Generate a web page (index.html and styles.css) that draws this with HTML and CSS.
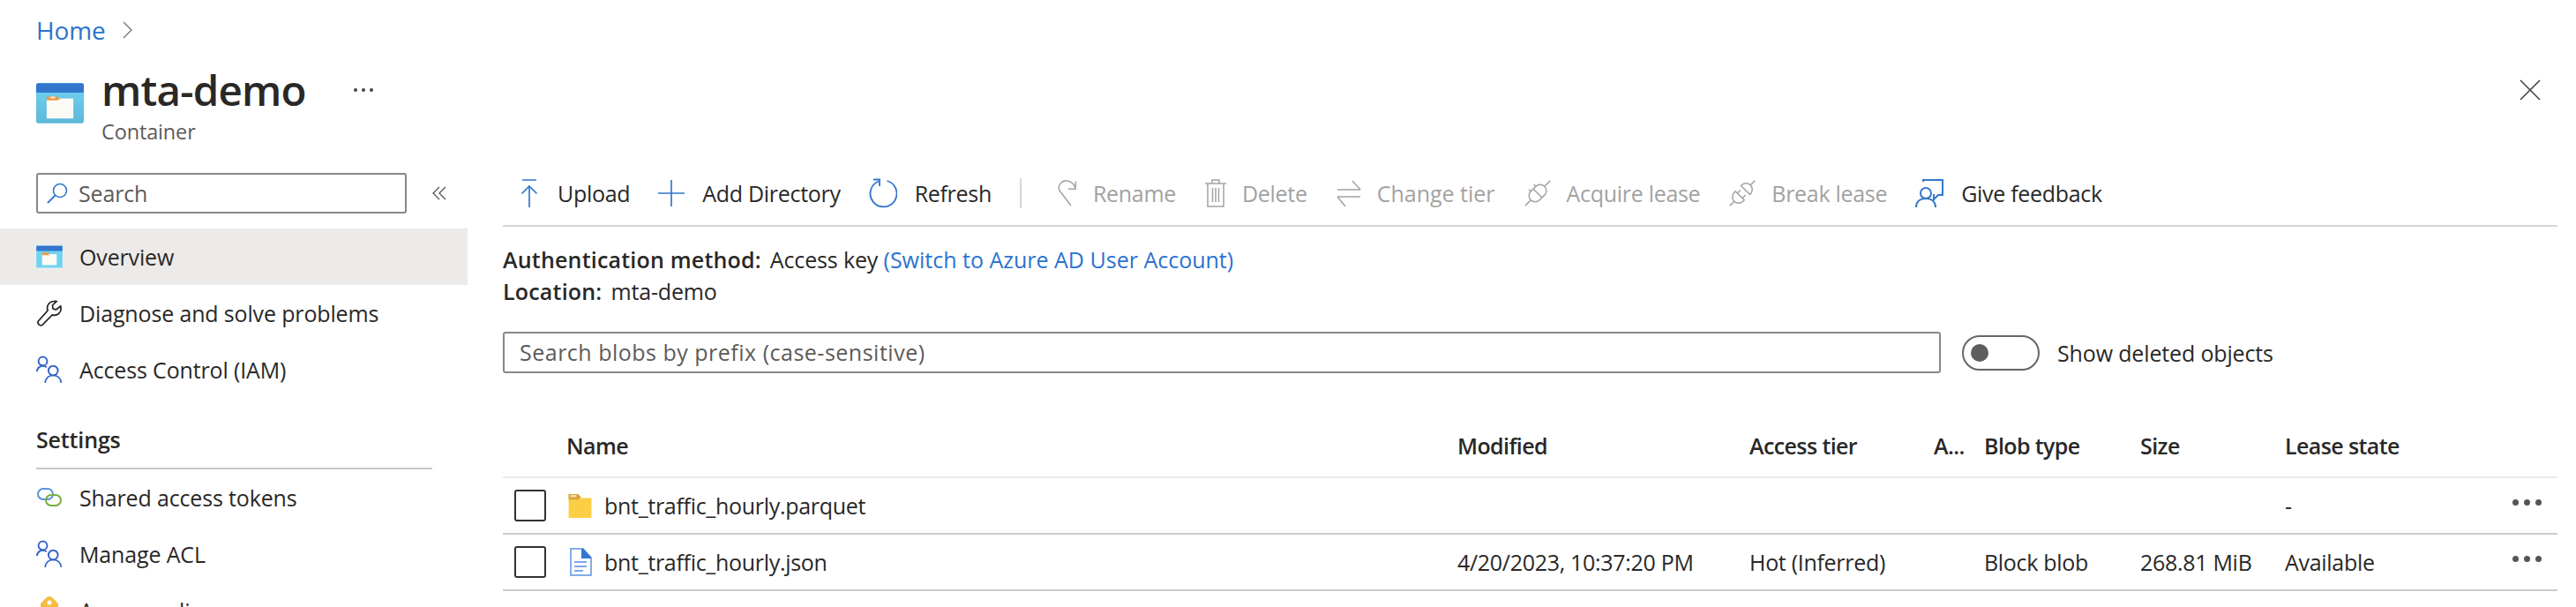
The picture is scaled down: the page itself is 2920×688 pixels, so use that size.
FILE: index.html
```html
<!DOCTYPE html>
<html lang="en">
<head>
    <meta charset="UTF-8">
    <title>mta-demo</title>
    <link rel="stylesheet" href="styles.css">
</head>
<body>
    <nav class="crumbs">
        <a href="#">Home</a>
        <svg class="crumb-sep" width="11" height="20" viewBox="0 0 11 20"><path d="M1 1l9 9-9 9" fill="none" stroke="#777" stroke-width="1.4"/></svg>
    </nav>

    <header class="title-row">
        <svg class="title-icon" width="54" height="48" viewBox="0 0 50 44">
            <defs><linearGradient id="bg" x1="0" y1="0" x2="0" y2="1"><stop offset="0" stop-color="#6fd3f2"/><stop offset="1" stop-color="#5db8da"/></linearGradient></defs>
            <rect x="0" y="1" width="50" height="42" rx="2" fill="url(#bg)"/>
            <path d="M0 3a2 2 0 0 1 2-2h46a2 2 0 0 1 2 2v8H0z" fill="#3277cc"/>
            <rect x="11" y="17" width="28" height="21" fill="#fbfbf6"/>
            <path d="M11 15h11l3 3-3 1H11z" fill="#ee9a3e"/>
            <rect x="15" y="15" width="5" height="2" fill="#fde6c6"/>
        </svg>
        <div class="title-text">
            <div class="title-line">
                <h1>mta-demo</h1>
                <span class="title-more"><i></i><i></i><i></i></span>
            </div>
            <div class="subtitle">Container</div>
        </div>
        <svg class="close" width="24" height="24" viewBox="0 0 24 24"><path d="M1 1l22 22M23 1L1 23" stroke="#444" stroke-width="1.6" fill="none"/></svg>
    </header>

    <div class="main">
        <aside class="side">
            <div class="side-search-row">
                <div class="side-search">
                    <svg width="24" height="24" viewBox="0 0 24 24"><circle cx="15" cy="9" r="7.5" fill="none" stroke="#3277cc" stroke-width="1.6"/><path d="M9.5 14.5L1 23" stroke="#3277cc" stroke-width="1.8"/></svg>
                    <span>Search</span>
                </div>
                <svg class="collapse" width="16" height="16" viewBox="0 0 16 16"><path d="M8 1L1 8l7 7M15 1L8 8l7 7" fill="none" stroke="#555" stroke-width="1.3"/></svg>
            </div>

            <ul class="menu">
                <li class="active">
                    <svg width="30" height="26" viewBox="0 0 50 44">
                        <rect x="0" y="1" width="50" height="42" fill="#6fd3f2"/>
                        <rect x="0" y="1" width="50" height="10" fill="#3277cc"/>
                        <rect x="11" y="17" width="28" height="21" fill="#fbfbf6"/>
                        <rect x="11" y="14" width="13" height="5" fill="#ee9a3e"/>
                    </svg>
                    Overview
                </li>
                <li>
                    <svg width="30" height="30" viewBox="0 0 28 30"><path d="M19 1.500a7.500 7.500 0 0 0-6.800 10.400L1.800 23.500a3.200 3.200 0 0 0 4.400 4.600l11-11.200A7.500 7.500 0 0 0 27 8.500l-.3-1.500-5.200 4-3.500-1.200-.5-3.800 4.500-4.400A7.500 7.500 0 0 0 19 1.500z" fill="none" stroke="#222" stroke-width="1.700"/></svg>
                    Diagnose and solve problems
                </li>
                <li>
                    <svg width="30" height="32" viewBox="0 0 28 30"><g fill="none" stroke="#3264c8" stroke-width="1.800"><circle cx="7" cy="6" r="4.600"/><path d="M0.500 17c1-4 3.500-6 6.500-6 1.500 0 3 .6 4 1.500"/><circle cx="18" cy="16" r="5"/><path d="M9.500 29c.5-5 4-8 8.500-8s8 3 8.500 8"/></g></svg>
                    Access Control (IAM)
                </li>
            </ul>

            <h2 class="side-head">Settings</h2>

            <ul class="menu">
                <li>
                    <svg width="30" height="22" viewBox="0 0 28 22"><rect x="1" y="1" width="17" height="12" rx="6" fill="none" stroke="#5b93e0" stroke-width="2"/><rect x="10" y="8" width="17" height="12" rx="6" fill="none" stroke="#78ad3c" stroke-width="2"/></svg>
                    Shared access tokens
                </li>
                <li>
                    <svg width="30" height="32" viewBox="0 0 28 30"><g fill="none" stroke="#3264c8" stroke-width="1.800"><circle cx="7" cy="6" r="4.600"/><path d="M0.500 17c1-4 3.500-6 6.500-6 1.500 0 3 .6 4 1.500"/><circle cx="18" cy="16" r="5"/><path d="M9.500 29c.5-5 4-8 8.500-8s8 3 8.500 8"/></g></svg>
                    Manage ACL
                </li>
                <li>
                    <svg width="30" height="32" viewBox="0 0 30 32"><path d="M15 0c2 0 3 1 4 2l6 6v24H5V8l6-6c1-1 2-2 4-2z" fill="#f5bd42"/><circle cx="15" cy="7" r="2.500" fill="#fff"/></svg>
                    Access policy
                </li>
            </ul>
        </aside>

        <main class="content">
            <div class="toolbar">
                <button class="tool">
                    <svg width="24" height="32" viewBox="0 0 22 32"><path d="M3 1h16M11 32V8M2.500 16.500L11 8l8.500 8.500" fill="none" stroke="#3277cc" stroke-width="1.700"/></svg>
                    Upload
                </button>
                <button class="tool">
                    <svg width="30" height="30" viewBox="0 0 30 30"><path d="M15 0v30M0 15h30" stroke="#3277cc" stroke-width="1.700"/></svg>
                    Add Directory
                </button>
                <button class="tool">
                    <svg width="32" height="34" viewBox="0 0 32 34"><path d="M11 3.500A15 15 0 1 0 20.500 3M5 1.500h7V9" fill="none" stroke="#3277cc" stroke-width="1.800"/></svg>
                    Refresh
                </button>
                <span class="tool-sep"></span>
                <button class="tool off">
                    <svg width="24" height="32" viewBox="0 0 24 32"><path d="M16 30L3 13C0 7 6 1 12 2c5 1 8 4 9 9M13 11l8 .5.5-9" fill="none" stroke="#a2a2a2" stroke-width="1.500"/></svg>
                    Rename
                </button>
                <button class="tool off">
                    <svg width="26" height="32" viewBox="0 0 24 32"><path d="M3 6v25h18V6M0 5h24M8 5V1h8v4M8.500 10v16M12 10v16M15.500 10v16" fill="none" stroke="#a2a2a2" stroke-width="1.500"/></svg>
                    Delete
                </button>
                <button class="tool off tier">
                    <svg width="30" height="32" viewBox="0 0 28 32"><path d="M1 12h26M18 2l9 10M27 20H1M10 31L1 20" fill="none" stroke="#a2a2a2" stroke-width="1.500"/></svg>
                    Change tier
                </button>
                <button class="tool off">
                    <svg width="32" height="32" viewBox="0 0 32 32"><g fill="none" stroke="#a2a2a2" stroke-width="1.500" transform="rotate(-45 16 16)"><path d="M-4 16h9M27 16h9M16 9v14"/><rect x="5" y="9" width="22" height="14" rx="7"/><path d="M12 6v3M20 6v3"/></g></svg>
                    Acquire lease
                </button>
                <button class="tool off">
                    <svg width="32" height="32" viewBox="0 0 32 32"><g fill="none" stroke="#a2a2a2" stroke-width="1.500" transform="rotate(-45 16 16)"><path d="M-4 16h7M29 16h7M12 12h5M12 20h5"/><path d="M12 9H10a7 7 0 0 0 0 14h2z"/><path d="M21 9h1a7 7 0 0 1 0 14h-1z"/></g></svg>
                    Break lease
                </button>
                <button class="tool">
                    <svg width="32" height="32" viewBox="0 0 32 32"><g fill="none" stroke="#3277cc" stroke-width="2"><path d="M9 3V1h22v17h-5l-5 5v-6"/><circle cx="12" cy="16" r="6"/><path d="M1 32c0-6 4-10 11-10s11 4 11 10"/></g></svg>
                    Give feedback
                </button>
            </div>

            <div class="info">
                <div><b>Authentication method:</b><span class="val">Access key</span> <a href="#">(Switch to Azure AD User Account)</a></div>
                <div><b>Location:</b><span class="val">mta-demo</span></div>
            </div>

            <div class="filter-row">
                <div class="filter">Search blobs by prefix (case-sensitive)</div>
                <span class="toggle"><i></i></span>
                <span>Show deleted objects</span>
            </div>

            <div class="row head">
                <span class="c-check"></span>
                <span class="c-name">Name</span>
                <span class="c-mod">Modified</span>
                <span class="c-tier">Access tier</span>
                <span class="c-a">A...</span>
                <span class="c-type">Blob type</span>
                <span class="c-size">Size</span>
                <span class="c-lease">Lease state</span>
            </div>
            <div class="row">
                <span class="c-check"><i class="box"></i></span>
                <span class="c-name">
                    <svg width="31" height="28" viewBox="0 0 24 26"><path d="M0 1h10l3 4h11v21H0z" fill="#fbcf45"/><path d="M0 1h10l3 3-3 3H0z" fill="#d9a63e"/><rect x="2" y="2" width="6" height="2" fill="#f5e6c2"/></svg>
                    bnt_traffic_hourly.parquet
                </span>
                <span class="c-mod"></span>
                <span class="c-tier"></span>
                <span class="c-a"></span>
                <span class="c-type"></span>
                <span class="c-size"></span>
                <span class="c-lease">-</span>
                <span class="c-more"><i></i><i></i><i></i></span>
            </div>
            <div class="row">
                <span class="c-check"><i class="box"></i></span>
                <span class="c-name">
                    <svg width="31" height="32" viewBox="0 0 31 32"><path d="M5 1h14l9 10v20H5z" fill="#fff" stroke="#5b93e0" stroke-width="1.500"/><path d="M17 1h2l9 10v1H17z" fill="#3277cc"/><path d="M9 16h14M9 21h14M9 26h10" stroke="#7ba9ea" stroke-width="2"/></svg>
                    bnt_traffic_hourly.json
                </span>
                <span class="c-mod">4/20/2023, 10:37:20 PM</span>
                <span class="c-tier">Hot (Inferred)</span>
                <span class="c-a"></span>
                <span class="c-type">Block blob</span>
                <span class="c-size">268.81 MiB</span>
                <span class="c-lease">Available</span>
                <span class="c-more"><i></i><i></i><i></i></span>
            </div>
        </main>
    </div>
</body>
</html>
```

FILE: styles.css
```css
/* Basic styling */
html, body {
    height: 688px;
    overflow: hidden;
}

body {
    margin: 0;
    font-family: "Open Sans", "Noto Sans", sans-serif;
    font-size: 25px;
    letter-spacing: -0.15px;
    color: #292827;
    background: #fff;
}

a {
    color: #2b72d0;
    text-decoration: none;
}

ul {
    list-style: none;
    margin: 0;
    padding: 0;
}

/* Header */
.crumbs {
    display: flex;
    align-items: center;
    gap: 19px;
    height: 67px;
    padding-left: 41px;
    font-size: 28px;
}

.title-row {
    display: flex;
    align-items: flex-start;
    height: 116px;
    padding-left: 41px;
    padding-right: 40px;
}

.title-icon {
    margin-top: 26px;
}

.title-text {
    margin-left: 20px;
    margin-top: 10px;
}

.title-line {
    display: flex;
    align-items: center;
    height: 50px;
}

h1 {
    margin: 0;
    font-size: 47.5px;
    font-weight: 600;
    letter-spacing: -0.8px;
    line-height: 50px;
}

.title-more {
    display: flex;
    gap: 5px;
    margin-left: 54px;
}

.title-more i {
    display: block;
    width: 4px;
    height: 4px;
    border-radius: 50%;
    background: #444;
}

.subtitle {
    margin-top: 7px;
    font-size: 23.5px;
    color: #5c5b5a;
    line-height: 30px;
}

.close {
    margin-left: auto;
    margin-top: 23px;
}

/* Sidebar */
.main {
    display: flex;
}

.side {
    width: 530px;
    flex-shrink: 0;
    padding-top: 13px;
}

.side-search-row {
    display: flex;
    align-items: center;
    padding-left: 41px;
    margin-bottom: 17px;
}

.side-search {
    display: flex;
    align-items: center;
    gap: 12px;
    width: 420px;
    height: 46px;
    box-sizing: border-box;
    padding-left: 10px;
    border: 2px solid #8a8886;
    border-radius: 3px;
    color: #5c5b5a;
}

.collapse {
    margin-left: 29px;
}

.menu li {
    display: flex;
    align-items: center;
    gap: 19px;
    height: 64px;
    padding-left: 41px;
}

.menu li svg {
    flex-shrink: 0;
}

.menu li.active {
    background: #edebe9;
}

.side-head {
    margin: 33px 0 0 41px;
    width: 449px;
    padding-bottom: 18px;
    border-bottom: 2px solid #c8c6c4;
    font-size: 25px;
    font-weight: 600;
    line-height: 28px;
}

/* Toolbar */
.content {
    flex: 1;
    padding: 0 21px 0 40px;
    min-width: 0;
}

.toolbar {
    display: flex;
    align-items: center;
    gap: 32px;
    height: 72px;
    padding-left: 18px;
    border-bottom: 2px solid #d6d6d6;
    letter-spacing: -0.3px;
}

.tool {
    display: flex;
    align-items: center;
    gap: 20px;
    padding: 0;
    background: none;
    border: none;
    font: inherit;
    letter-spacing: inherit;
    color: inherit;
    white-space: nowrap;
}

.tool.off {
    gap: 17px;
    color: #a2a2a2;
}

.tool.tier {
    letter-spacing: 0;
}

.tool-sep {
    width: 2px;
    height: 34px;
    margin-right: 8px;
    background: #d6d6d6;
}

.info {
    margin-top: 19px;
    line-height: 36px;
}

.info b {
    font-weight: 600;
    letter-spacing: 0.2px;
}

.info a {
    letter-spacing: 0;
}

.val {
    margin-left: 10px;
}

.filter-row {
    display: flex;
    align-items: center;
    margin-top: 28px;
}

.filter {
    width: 1630px;
    height: 47px;
    box-sizing: border-box;
    padding-left: 17px;
    letter-spacing: 0.5px;
    line-height: 43px;
    border: 2px solid #8a8886;
    border-radius: 3px;
    color: #5c5b5a;
}

.toggle {
    position: relative;
    display: block;
    width: 88px;
    height: 40px;
    box-sizing: border-box;
    margin: 0 20px 0 24px;
    border: 2px solid #666;
    border-radius: 20px;
}

.toggle i {
    position: absolute;
    left: 8px;
    top: 8px;
    width: 20px;
    height: 20px;
    border-radius: 50%;
    background: #605e5c;
}

/* Blob table */
.row {
    display: flex;
    align-items: center;
    height: 62px;
    border-bottom: 2px solid #cbcbcb;
    white-space: nowrap;
    letter-spacing: -0.3px;
}

.row.head {
    height: 70px;
    margin-top: 47px;
    font-weight: 600;
    letter-spacing: -0.6px;
    border-bottom-color: #eaeaea;
}

.c-check {
    display: flex;
    width: 72px;
    padding-left: 13px;
    box-sizing: border-box;
}

.box {
    display: block;
    width: 36px;
    height: 36px;
    box-sizing: border-box;
    border: 2px solid #323130;
    border-radius: 3px;
}

.c-name {
    display: flex;
    align-items: center;
    gap: 12px;
    width: 1010px;
}

.c-mod { width: 331px; }
.c-tier { width: 209px; }
.c-a { width: 57px; }
.c-type { width: 177px; }
.c-size { width: 164px; }
.c-lease { width: 258px; }

.c-more {
    display: flex;
    gap: 6px;
    margin-top: -8px;
}

.c-more i {
    display: block;
    width: 7px;
    height: 7px;
    border-radius: 50%;
    background: #555;
}
```
